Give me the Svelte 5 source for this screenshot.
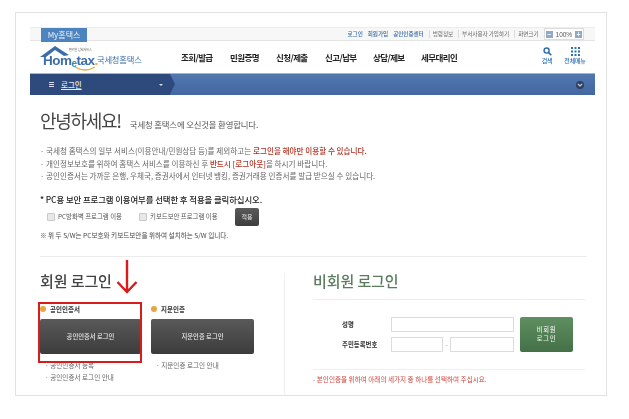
<div class="page">
  <div class="frame">
    <div class="topbar">
      <div class="mytab">My홈택스</div>
      <div class="toplinks">
        <span class="blue">로그인</span>
        <span class="blue">회원가입</span>
        <span class="blue">공인인증센터</span>
        <span class="sep">법령정보</span>
        <span class="sep">부서사용자 가입하기</span>
        <span class="sep">화면크기</span>
        <span class="zoom"><i>−</i><b>100%</b><i>+</i></span>
      </div>
    </div>
    <div class="header">
      <div class="logo">
        <svg class="roof" width="56" height="26" viewBox="0 0 56 26">
          <path d="M0 11 L15 0 L29 9 L24 10 L15 4 L6 11 Z" fill="#3b6ea8" />
          <path d="M35 21 Q45 27 55 21" stroke="#e8a93c" stroke-width="1.3" fill="none" />
        </svg>
        <span class="slogan">편리한 납세서비스</span>
        <span class="wordmark">Hom<small>e</small>tax<em>.</em></span>
        <span class="kname">국세청홈택스</span>
      </div>
      <nav class="menu">
        <span class="m1">조회/발급</span>
        <span class="m2">민원증명</span>
        <span class="m3">신청/제출</span>
        <span class="m4">신고/납부</span>
        <span class="m5">상담/제보</span>
        <span class="m6">세무대리인</span>
      </nav>
      <div class="tools">
        <div class="tool">
          <svg width="9" height="9" viewBox="0 0 10 10"><circle cx="4" cy="4" r="2.8" fill="none" stroke="#2f6fb0" stroke-width="1.6" /><path d="M6 6 L9.2 9.2" stroke="#2f6fb0" stroke-width="1.8" /></svg>
          <span>검색</span>
        </div>
        <div class="tool">
          <svg width="9" height="9" viewBox="0 0 9 9" fill="#2f6fb0">
            {#each [0, 3.5, 7] as y}
              {#each [0, 3.5, 7] as x}
                <rect {x} {y} width="2" height="2" />
              {/each}
            {/each}
          </svg>
          <span>전체메뉴</span>
        </div>
      </div>
    </div>
    <div class="crumb">
      <div class="crumbdark">
        <span class="burger"></span>
        <span class="crumbtext">로그인</span>
        <span class="caret"></span>
      </div>
      <span class="circle">
        <svg width="6" height="4" viewBox="0 0 6 4"><path d="M.8.8 3 3 5.2.8" fill="none" stroke="#c8d4e4" stroke-width="1.1" /></svg>
      </span>
    </div>

    <div class="content">
      <div class="hello">
        <h1>안녕하세요!</h1>
        <span>국세청 홈택스에 오신것을 환영합니다.</span>
      </div>
      <ul class="notes">
        <li>국세청 홈택스의 일부 서비스(이용안내/민원상담 등)를 제외하고는 <strong>로그인을 해야만 이용할 수 있습니다.</strong></li>
        <li>개인정보보호를 위하여 홈택스 서비스를 이용하신 후 <strong>반드시 [로그아웃]</strong>을 하시기 바랍니다.</li>
        <li>공인인증서는 가까운 은행, 우체국, 증권사에서 인터넷 뱅킹, 증권거래용 인증서를 발급 받으실 수 있습니다.</li>
      </ul>
      <p class="choose">* PC용 보안 프로그램 이용여부를 선택한 후 적용을 클릭하십시오.</p>
      <div class="options">
        <label class="opt o1"><span class="check"></span>PC방화벽 프로그램 이용</label>
        <label class="opt o2"><span class="check"></span>키보드보안 프로그램 이용</label>
        <span class="apply">적용</span>
      </div>
      <p class="fine">※ 위 두 S/W는 PC보호와 키보드보안을 위하여 설치하는 S/W 입니다.</p>

      <div class="logins">
        <section class="member">
          <h2>회원 로그인</h2>
          <div class="methods">
            <div class="method">
              <div class="mtitle"><span class="dot"></span>공인인증서</div>
              <div class="darkbtn">공인인증서 로그인</div>
              <div class="mlink">공인인증서 등록</div>
              <div class="mlink">공인인증서 로그인 안내</div>
            </div>
            <div class="method">
              <div class="mtitle"><span class="dot"></span>지문인증</div>
              <div class="darkbtn">지문인증 로그인</div>
              <div class="mlink">지문인증 로그인 안내</div>
            </div>
          </div>
        </section>
        <section class="guest">
          <h2>비회원 로그인</h2>
          <div class="gform">
            <div class="fields">
              <div class="row"><span class="lab">성명</span><span class="inp full"></span></div>
              <div class="row"><span class="lab">주민등록번호</span><span class="inp half"></span><span class="dash">-</span><span class="inp half2"></span></div>
            </div>
            <div class="greenbtn">비회원<br />로그인</div>
          </div>
          <p class="warn">본인인증을 위하여 아래의 세가지 중 하나를 선택하여 주십시요.</p>
        </section>
      </div>
    </div>

    <div class="redbox"></div>
    <svg class="arrow" width="22" height="36" viewBox="0 0 22 36">
      <path d="M11 1 V33 M1.5 23 L11 33 L20.5 23" fill="none" stroke="#d81c1c" stroke-width="2.4" />
    </svg>
  </div>
</div>

<style>
  :global(body) {
    margin: 0;
    background: #fff;
  }
  .page {
    width: 629px;
    height: 419px;
    padding: 12px 0 0 15px;
    box-sizing: border-box;
    font-family: "Noto Sans CJK KR", "Liberation Sans", sans-serif;
    color: #444;
    overflow: hidden;
    filter: blur(0.4px);
  }
  .frame {
    position: relative;
    width: 592px;
    height: 384px;
    box-sizing: border-box;
    border: 1px solid #e2e2e2;
    padding: 14px 11px 0 14px;
  }
  .topbar {
    display: flex;
    justify-content: space-between;
    height: 14px;
    box-sizing: border-box;
    background: #f7f7f7;
    border-top: 1px solid #ececec;
    border-bottom: 1px solid #e4e4e4;
    padding: 0 11px;
  }
  .mytab {
    width: 46px;
    height: 14px;
    background: #4d84bd;
    color: #e8f0f8;
    font: 8px/14px "Noto Sans CJK KR", sans-serif;
    text-align: center;
  }
  .toplinks {
    display: flex;
    align-items: center;
    gap: 5px;
    font-size: 5.6px;
    color: #666;
    letter-spacing: -0.05px;
  }
  .toplinks .blue {
    color: #3a6ea5;
    font-weight: 500;
  }
  .sep {
    border-left: 1px solid #ddd;
    padding-left: 3px;
  }
  .zoom {
    display: flex;
    align-items: center;
    gap: 3px;
    border: 1px solid #ddd;
    background: #fff;
    height: 10px;
    padding: 0 1px;
  }
  .zoom i {
    width: 7px;
    height: 7px;
    background: #8fa9c6;
    color: #fff;
    font: 700 7px/7px "Liberation Sans", sans-serif;
    text-align: center;
  }
  .zoom b {
    font: 400 6.5px "Liberation Sans", sans-serif;
    color: #555;
  }
  .header {
    position: relative;
    height: 32px;
    display: flex;
  }
  .logo {
    position: relative;
    width: 137px;
    flex: none;
    margin-left: 10px;
  }
  .roof {
    position: absolute;
    left: 0;
    top: 5px;
  }
  .slogan {
    position: absolute;
    left: 29px;
    top: 7px;
    font-size: 3px;
    color: #555;
  }
  .wordmark {
    position: absolute;
    left: 3px;
    top: 11px;
    font: 700 13.5px/17px "Liberation Sans", sans-serif;
    color: #3b6ea8;
    letter-spacing: -0.5px;
  }
  .wordmark small {
    font-size: 10px;
    color: #3b8aa8;
    position: relative;
    top: 2px;
  }
  .wordmark em {
    color: #e8a93c;
    font-style: normal;
  }
  .kname {
    position: absolute;
    left: 57px;
    top: 12px;
    font-size: 8.3px;
    line-height: 12px;
    color: #3b6ea8;
    letter-spacing: -0.2px;
  }
  .menu {
    display: flex;
    padding-top: 10px;
    font-size: 8.5px;
    line-height: 13px;
    font-weight: 700;
    color: #222;
    letter-spacing: -0.6px;
    flex: none;
    width: 290px;
  }
  .menu span {
    flex: none;
  }
  .m1 { width: 49px; margin-left: 4px; }
  .m2 { width: 46px; }
  .m3 { width: 49px; }
  .m4 { width: 48px; }
  .m5 { width: 48px; }
  .tools {
    position: absolute;
    right: 8px;
    top: 6px;
    display: flex;
    gap: 4px;
  }
  .tool {
    display: flex;
    flex-direction: column;
    align-items: center;
    width: 24px;
    font-size: 6px;
    line-height: 9px;
    color: #2f6fb0;
    font-weight: 500;
    letter-spacing: -0.2px;
  }
  .crumb {
    height: 22px;
    display: flex;
    justify-content: space-between;
    align-items: center;
    background: linear-gradient(#5078b0, #4467a0);
    border-top: 1px solid #9fb6d2;
    box-sizing: border-box;
    padding-right: 11px;
  }
  .crumbdark {
    position: relative;
    width: 140px;
    height: 21px;
    background: #2e4a7c;
    display: flex;
    align-items: center;
    color: #e6ecf5;
  }
  .crumbdark::after {
    content: "";
    position: absolute;
    left: 140px;
    top: 0;
    border-left: 5px solid #2e4a7c;
    border-top: 10.5px solid transparent;
    border-bottom: 10.5px solid transparent;
  }
  .burger {
    width: 5px;
    height: 1px;
    margin-left: 19px;
    background: #dde;
    box-shadow: 0 2px #dde, 0 4px #dde;
    position: relative;
    top: -2px;
  }
  .crumbtext {
    margin-left: 7px;
    font-size: 7.5px;
    font-weight: 500;
    text-decoration: underline;
  }
  .caret {
    position: absolute;
    left: 129px;
    top: 10px;
    border-top: 2px solid #dde;
    border-left: 2px solid transparent;
    border-right: 2px solid transparent;
  }
  .circle {
    width: 8px;
    height: 8px;
    border-radius: 50%;
    background: #2f4060;
    display: flex;
    align-items: center;
    justify-content: center;
  }
  .content {
    padding: 0 8px 0 10px;
  }
  .hello {
    display: flex;
    align-items: baseline;
    gap: 9px;
    margin-top: 12px;
    height: 26px;
  }
  h1 {
    margin: 0;
    font-size: 18px;
    line-height: 26px;
    font-weight: 400;
    letter-spacing: -1.3px;
    color: #444;
  }
  .hello span {
    font-size: 8.4px;
    color: #555;
    letter-spacing: -0.15px;
  }
  .notes {
    list-style: none;
    margin: 12px 0 0;
    padding: 0;
    font-size: 7.6px;
    line-height: 12.5px;
    color: #666;
  }
  .notes li::before {
    content: "· ";
  }
  .notes strong {
    font-weight: 500;
    color: #b03020;
  }
  .choose {
    margin: 10px 0 0;
    font-size: 8.4px;
    line-height: 12px;
    font-weight: 500;
    color: #222;
    letter-spacing: -0.08px;
  }
  .options {
    display: flex;
    align-items: center;
    height: 18px;
    margin-top: 3px;
    font-size: 6.4px;
    color: #555;
  }
  .opt {
    display: flex;
    align-items: center;
  }
  .o1 { margin-left: 7px; width: 92px; }
  .o2 { width: 96px; }
  .check {
    width: 6px;
    height: 6px;
    margin-right: 3px;
    background: #e8e8e8;
    border: 1px solid #c8c8c8;
    border-radius: 1px;
  }
  .apply {
    width: 24px;
    height: 18px;
    border-radius: 2px;
    background: linear-gradient(#5a5a5a, #3d3d3d);
    color: #eee;
    text-align: center;
    font-size: 6px;
    line-height: 18px;
  }
  .fine {
    margin: 5px 0 0;
    font-size: 6.6px;
    line-height: 8px;
    color: #444;
  }
  .logins {
    display: flex;
    margin-top: 17px;
    border-top: 1px solid #ececec;
    height: 138px;
  }
  .member {
    width: 245px;
    flex: none;
    position: relative;
  }
  .member::after {
    content: "";
    position: absolute;
    right: 0;
    top: 16px;
    bottom: 0;
    width: 1px;
    background: #f0f0f0;
  }
  h2 {
    margin: 0;
    font-size: 15px;
    line-height: 20px;
    font-weight: 500;
    letter-spacing: -0.1px;
  }
  .member h2 {
    margin-top: 14px;
    color: #444;
  }
  .methods {
    display: flex;
    gap: 10px;
    margin-top: 12px;
  }
  .method {
    width: 101px;
  }
  .method:nth-child(2) {
    width: 103px;
  }
  .mtitle {
    display: flex;
    align-items: center;
    height: 12px;
    font-size: 6.5px;
    font-weight: 700;
    color: #333;
    gap: 4px;
  }
  .dot {
    width: 6px;
    height: 6px;
    border-radius: 50%;
    background: #e9a53f;
  }
  .darkbtn {
    height: 35px;
    margin-top: 4px;
    margin-bottom: 5px;
    border-radius: 2px;
    background: linear-gradient(#595959, #3c3c3c);
    color: #eee;
    font-size: 6.3px;
    font-weight: 500;
    line-height: 35px;
    text-align: center;
  }
  .mlink {
    font-size: 6.6px;
    line-height: 12px;
    color: #666;
    padding-left: 5px;
    white-space: nowrap;
  }
  .mlink::before {
    content: "· ";
  }
  .guest {
    margin-left: 28px;
    width: 272px;
  }
  .guest h2 {
    margin-top: 14px;
    color: #5a7d5e;
    padding-bottom: 8px;
    border-bottom: 1px solid #ececec;
  }
  .gform {
    display: flex;
    gap: 6px;
    margin-left: 29px;
    margin-top: 17px;
  }
  .fields {
    display: flex;
    flex-direction: column;
    gap: 5px;
  }
  .row {
    display: flex;
    align-items: center;
    height: 15px;
  }
  .lab {
    width: 49px;
    font-size: 6.4px;
    font-weight: 700;
    color: #333;
  }
  .inp {
    display: block;
    height: 13px;
    border: 1px solid #dcdcdc;
    background: #fff;
  }
  .full { width: 121px; }
  .half { width: 50px; }
  .half2 { width: 62px; }
  .dash {
    width: 7px;
    text-align: center;
    font-size: 6px;
    color: #777;
  }
  .greenbtn {
    width: 53px;
    height: 35px;
    box-sizing: border-box;
    border-radius: 2px;
    background: linear-gradient(#5f8f60, #457048);
    color: #e6eee6;
    font-size: 6.3px;
    font-weight: 500;
    line-height: 9px;
    letter-spacing: 0.7px;
    text-align: center;
    padding-top: 8px;
  }
  .warn {
    margin: 17px 0 0;
    border-top: 1px solid #f0f0f0;
    padding-top: 5px;
    font-size: 6.6px;
    line-height: 9px;
    color: #d0463c;
  }
  .warn::before {
    content: "- ";
    color: #888;
  }
  .redbox {
    position: absolute;
    left: 22px;
    top: 289px;
    width: 100px;
    height: 57px;
    border: 2px solid #d81c1c;
  }
  .arrow {
    position: absolute;
    left: 100px;
    top: 246px;
  }
</style>
